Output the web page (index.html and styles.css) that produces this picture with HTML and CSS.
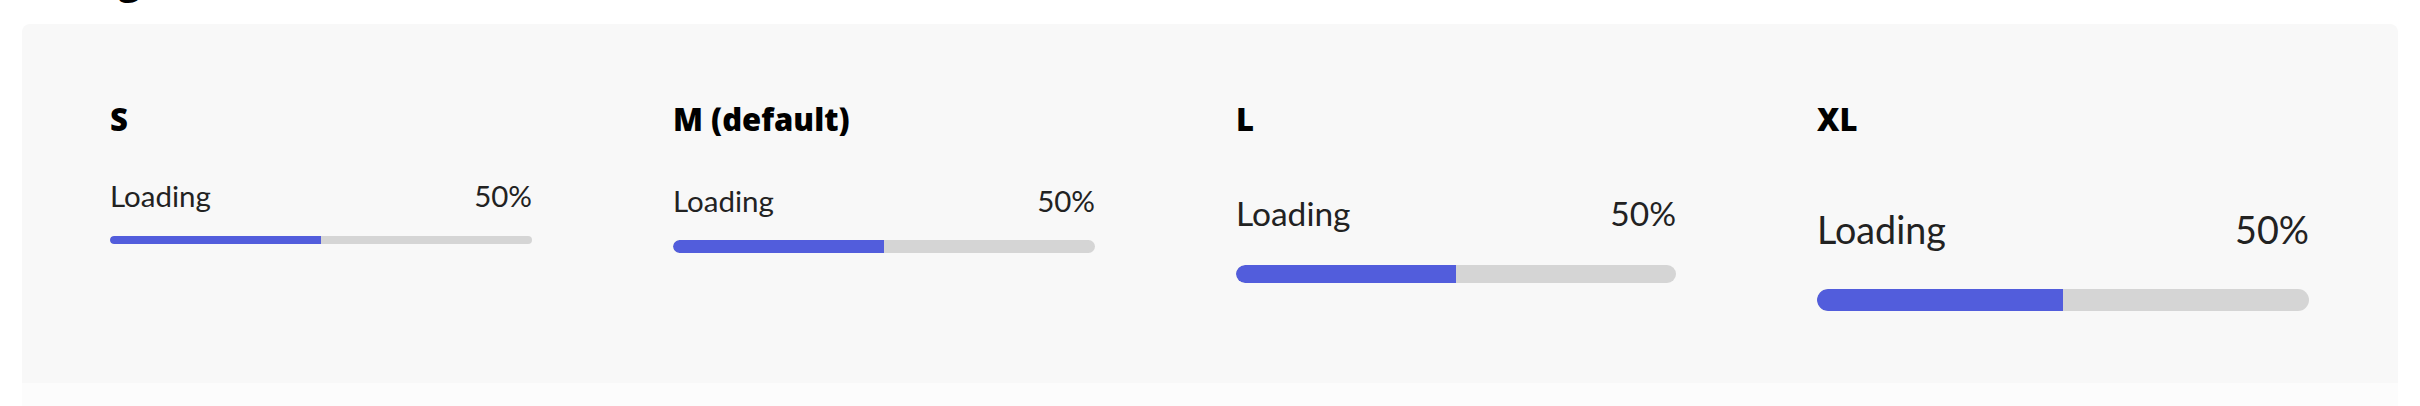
FILE: index.html
```html
<!DOCTYPE html>
<html lang="en">
<head>
<meta charset="utf-8">
<title>Progress bar sizes</title>
<link rel="stylesheet" href="styles.css">
</head>
<body>
<main class="page">
  <h2 class="section-title">Sizing</h2>
  <section class="example">
    <div class="example-row">
      <div class="variant variant-s">
        <h3 class="variant-title">S</h3>
        <div class="progress">
          <div class="progress-head"><span class="progress-label">Loading</span><span class="progress-value">50%</span></div>
          <div class="track"><div class="fill" style="width:50%"></div></div>
        </div>
      </div>
      <div class="variant variant-m">
        <h3 class="variant-title">M (default)</h3>
        <div class="progress">
          <div class="progress-head"><span class="progress-label">Loading</span><span class="progress-value">50%</span></div>
          <div class="track"><div class="fill" style="width:50%"></div></div>
        </div>
      </div>
      <div class="variant variant-l">
        <h3 class="variant-title">L</h3>
        <div class="progress">
          <div class="progress-head"><span class="progress-label">Loading</span><span class="progress-value">50%</span></div>
          <div class="track"><div class="fill" style="width:50%"></div></div>
        </div>
      </div>
      <div class="variant variant-xl">
        <h3 class="variant-title">XL</h3>
        <div class="progress">
          <div class="progress-head"><span class="progress-label">Loading</span><span class="progress-value">50%</span></div>
          <div class="track"><div class="fill" style="width:50%"></div></div>
        </div>
      </div>
    </div>
  </section>
  <div class="code-block"></div>
</main>
</body>
</html>
```

FILE: styles.css
```css
html, body {
  margin: 0;
  padding: 0;
  background: #ffffff;
}

body {
  font-family: "Lato", "Open Sans", sans-serif;
  color: #222222;
  height: 406px;
  overflow: hidden;
}

.page {
  padding: 0 22px;
}

.section-title {
  margin: -37px 0 0 10px;
  font-family: "Open Sans", "Lato", sans-serif;
  font-size: 36px;
  line-height: 1;
  font-weight: 800;
  color: #000000;
}

.example {
  margin-top: 25px;
  height: 359px;
  box-sizing: border-box;
  padding: 80px 88px 0 88px;
  background: #f8f8f8;
  border-radius: 8px 8px 0 0;
}

.example-row {
  display: flex;
  align-items: flex-start;
  gap: 141px;
}

.variant {
  display: flex;
  flex-direction: column;
}

.variant-title {
  margin: 0;
  font-family: "Open Sans", "Lato", sans-serif;
  font-size: 31px;
  line-height: 1;
  font-weight: 800;
  color: #000000;
}

.progress {
  display: flex;
  flex-direction: column;
}

.progress-head {
  display: flex;
  justify-content: space-between;
  line-height: 1;
  color: #222222;
}

.track {
  background: #d5d5d5;
  border-radius: 999px;
  overflow: hidden;
}

.fill {
  height: 100%;
  background: #525ddc;
  border-radius: 999px 0 0 999px;
}

.variant-s .progress { width: 422px; }
.variant-s .progress-head { font-size: 29.5px; margin-top: 45.5px; }
.variant-s .track { height: 8px; margin-top: 26px; }

.variant-m .progress { width: 422px; }
.variant-m .progress-head { font-size: 29.5px; margin-top: 50.5px; }
.variant-m .track { height: 12.5px; margin-top: 25px; }

.variant-l .progress { width: 440px; }
.variant-l .progress-head { font-size: 33.5px; margin-top: 62px; }
.variant-l .track { height: 18px; margin-top: 34px; }

.variant-xl .progress { width: 492px; }
.variant-xl .progress-head { font-size: 37.7px; margin-top: 75.6px; }
.variant-xl .track { height: 22px; margin-top: 40.7px; }

.code-block {
  height: 40px;
  background: #fcfcfc;
}
```
